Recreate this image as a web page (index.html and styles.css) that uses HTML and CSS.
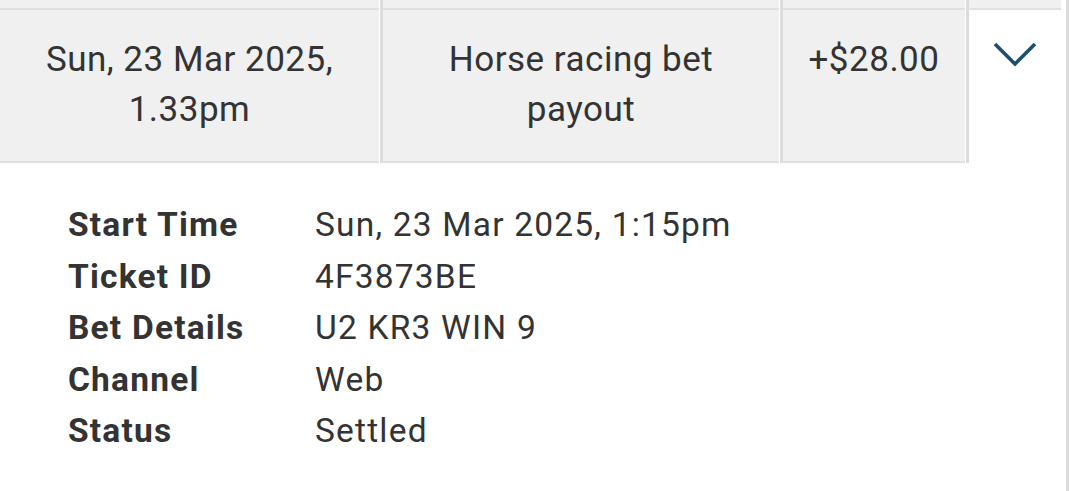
FILE: index.html
```html
<!DOCTYPE html>
<html>
<head>
  <title>Transaction history</title>
  <link rel="stylesheet" href="styles.css">
</head>
<body>
  <div class="card">
    <!-- bottom of the row above -->
    <div class="row row-prev">
      <div class="cell c-date"></div>
      <div class="cell c-desc"></div>
      <div class="cell c-amount"></div>
      <div class="cell c-toggle"></div>
    </div>

    <div class="row row-open">
      <div class="cell c-date">Sun, 23 Mar 2025,<br>1.33pm</div>
      <div class="cell c-desc">Horse racing bet<br>payout</div>
      <div class="cell c-amount">+$28.00</div>
      <div class="cell c-toggle">
        <svg class="chevron" width="44" height="26" viewBox="0 0 44 26">
          <path d="M2 2 L22 22 L42 2" fill="none" stroke="#1c4e6e" stroke-width="3.6"/>
        </svg>
      </div>
    </div>

    <div class="details">
      <div class="label">Start Time</div>
      <div class="value">Sun, 23 Mar 2025, 1:15pm</div>
      <div class="label">Ticket ID</div>
      <div class="value">4F3873BE</div>
      <div class="label">Bet Details</div>
      <div class="value">U2 KR3 WIN 9</div>
      <div class="label">Channel</div>
      <div class="value">Web</div>
      <div class="label">Status</div>
      <div class="value">Settled</div>
    </div>
  </div>
</body>
</html>
```

FILE: styles.css
```css
body {
  margin: 0;
  background: #fff;
  font-family: Roboto, "Liberation Sans", sans-serif;
  color: #333;
}
.card {
  width: 1069px;
  height: 491px;
  box-sizing: border-box;
  border-right: 3px solid #dcdcdc;
  overflow: hidden;
}
.row {
  display: flex;
}
.cell {
  box-sizing: border-box;
  background: #f0f0f0;
  text-align: center;
}
.cell + .cell {
  margin-left: 1px;
  border-left: 3px solid #dcdcdc;
}
.c-date { width: 379px; }
.c-desc { width: 399px; }
.c-amount { width: 185px; }
.c-toggle { flex: 1; }

.row-prev .cell {
  height: 10px;
  border-bottom: 2px solid #e0e0e0;
}
.row-prev .c-toggle {
  margin-right: 5px;
}

.row-open .cell {
  padding: 25px 8px 26px;
  font-size: 35px;
  letter-spacing: 0.5px;
  line-height: 50px;
  border-bottom: 2px solid #e0e0e0;
}
.row-open .c-toggle {
  background: #fff;
  border-bottom: none;
  padding: 32px 6px 0 0;
  line-height: 0;
}

.details {
  display: grid;
  grid-template-columns: 247px 1fr;
  padding: 36px 0 0 68px;
  font-size: 33.5px;
  letter-spacing: 1.2px;
  line-height: 51.5px;
}
.label {
  font-weight: bold;
}
```
